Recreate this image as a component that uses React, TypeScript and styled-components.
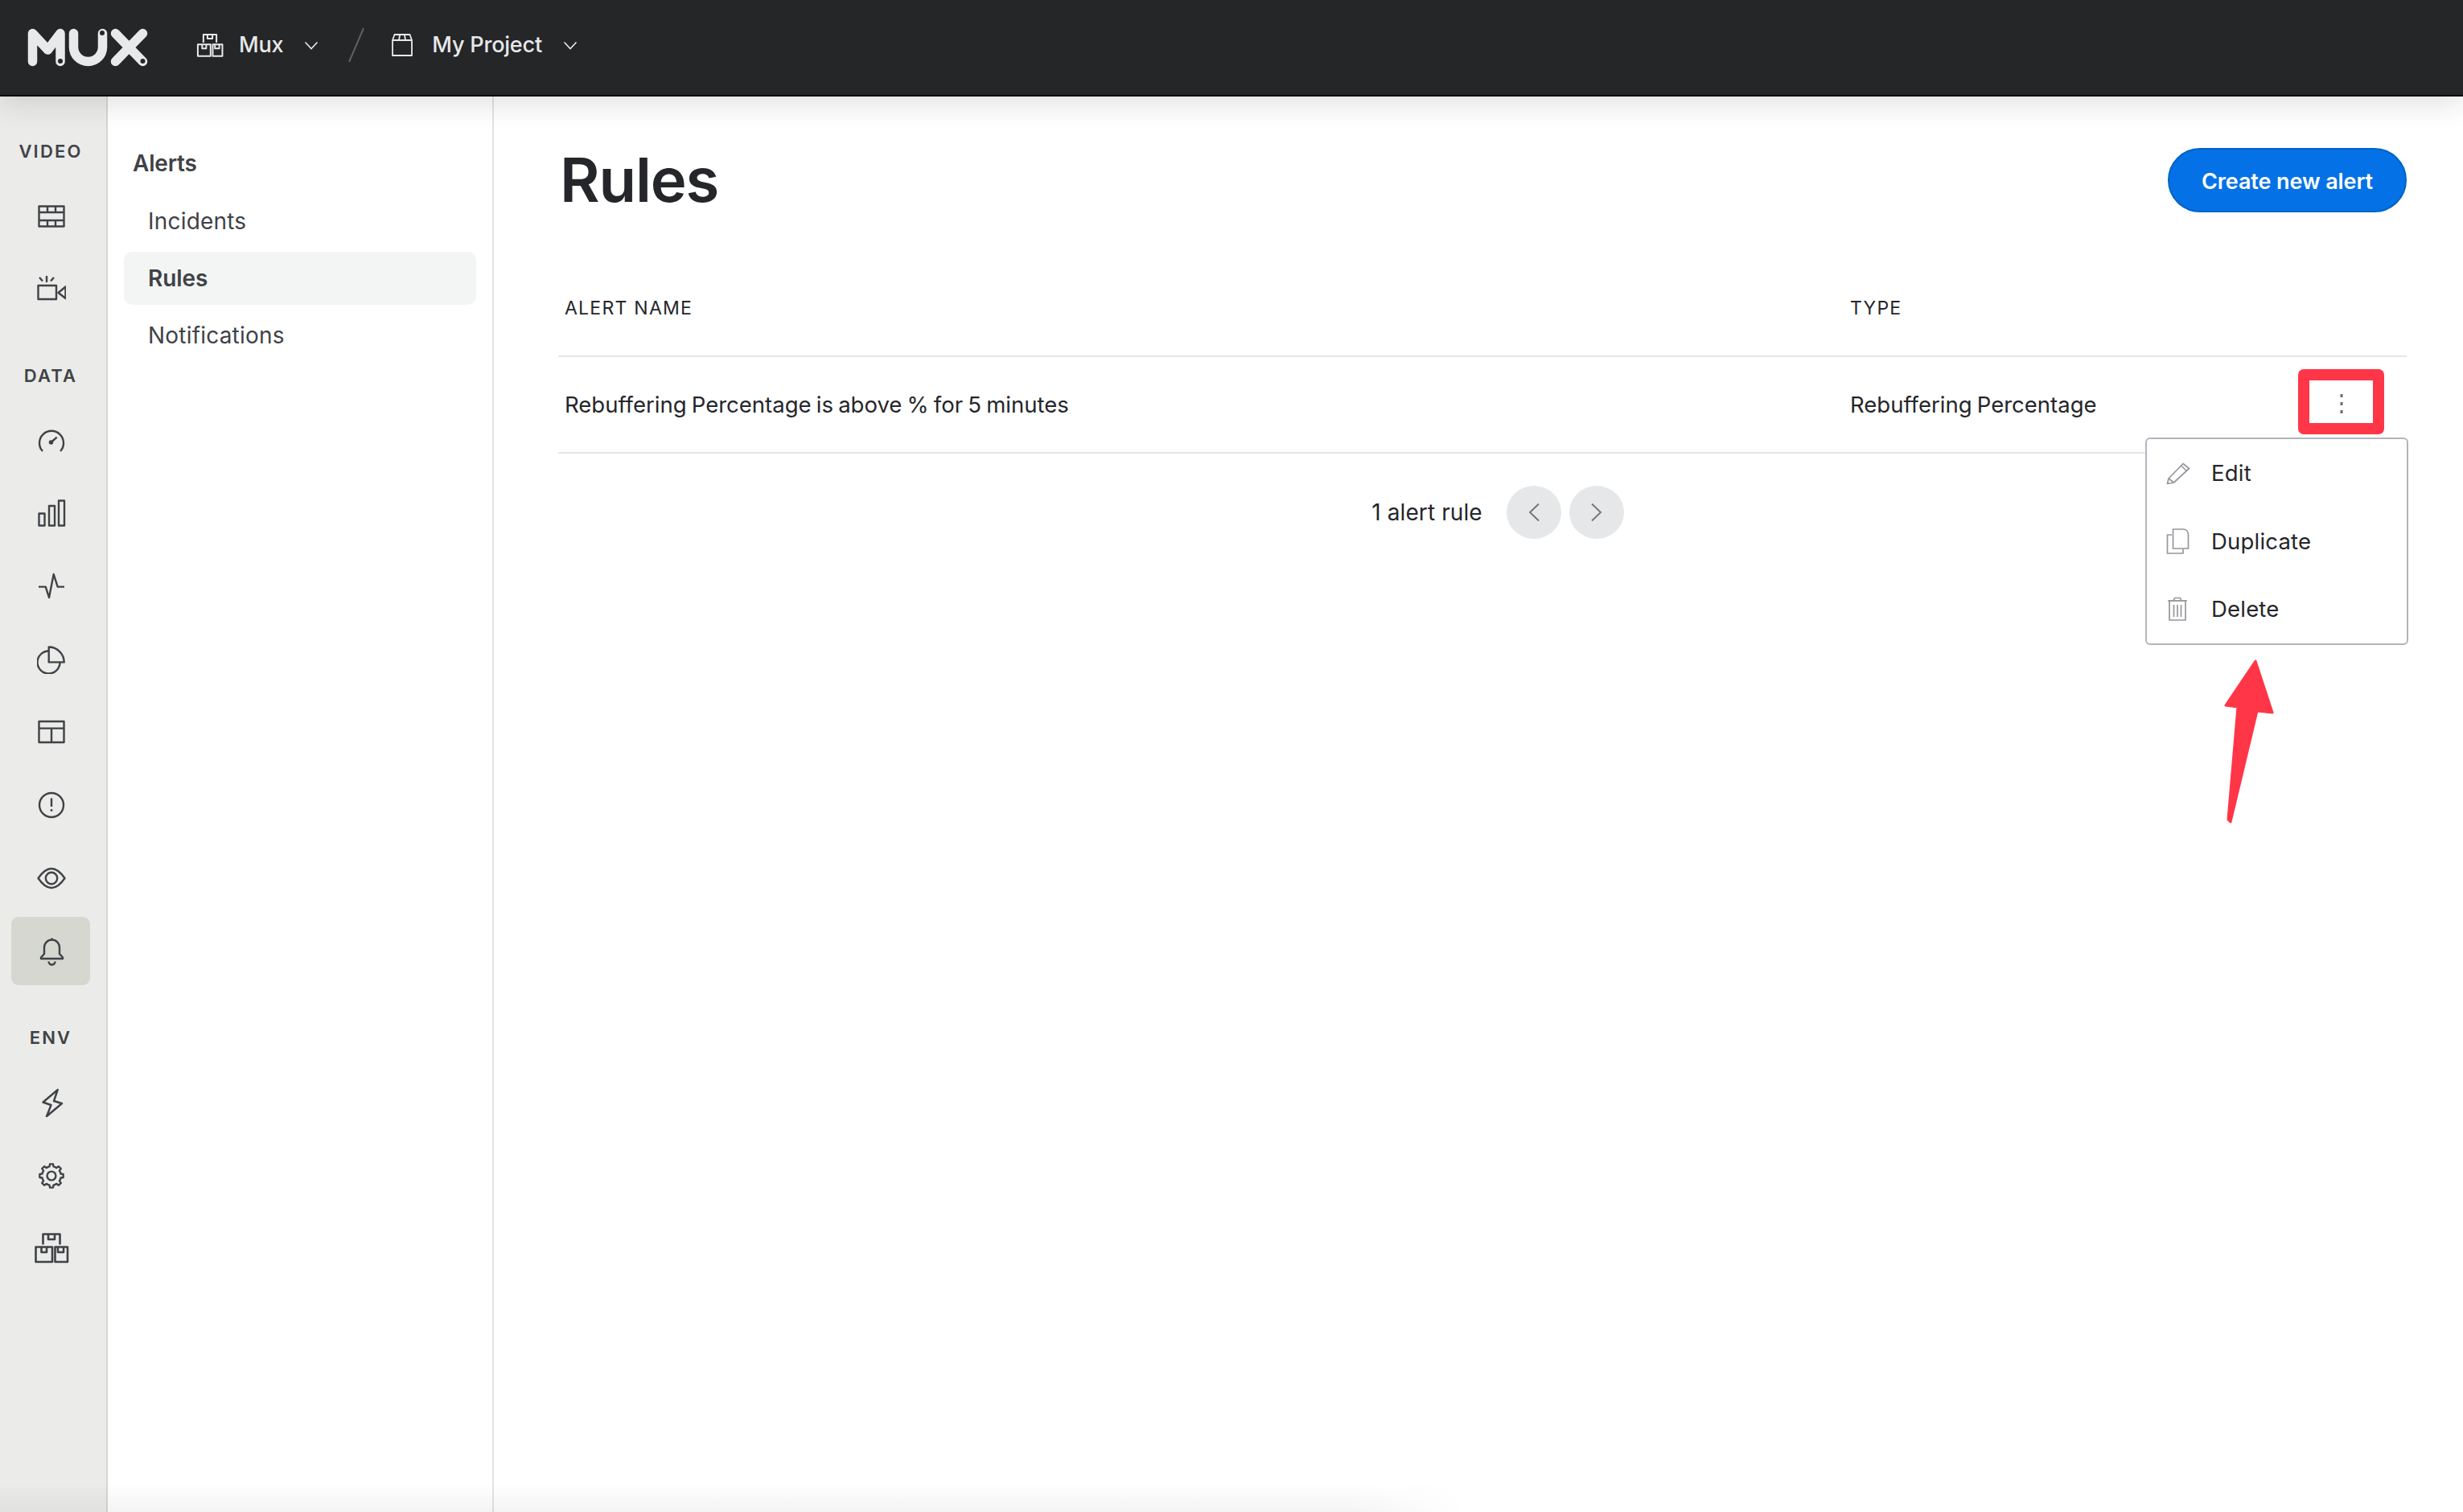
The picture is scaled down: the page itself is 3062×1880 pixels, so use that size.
import React from "react";
import styled, { createGlobalStyle } from "styled-components";

const FONT = `Inter, "Liberation Sans", sans-serif`;

const Global = createGlobalStyle`
  html, body { margin: 0; padding: 0; background: #fff; }
  body { font-family: ${FONT}; overflow: hidden; }
  * { box-sizing: border-box; }
`;

const Page = styled.div`
  position: relative;
  width: 3062px;
  height: 1880px;
  display: flex;
  flex-direction: column;
  overflow: hidden;
  background: #fff;
`;

const TopBar = styled.header`
  position: relative;
  z-index: 2;
  height: 120px;
  flex: none;
  display: flex;
  align-items: center;
  padding: 0 0 6px 34px;
  background: #252628;
  border-bottom: 2px solid #08090a;
  box-shadow: 0 10px 32px rgba(30, 32, 34, 0.13);
  color: #e8e9ea;
`;

const LogoMark = styled.svg`
  width: 150px;
  height: 48px;
  margin: 6px 60px 0 0;
  flex: none;
`;

const CrumbIcon = styled.span<{ $gap: number }>`
  display: flex;
  margin-right: ${(p) => p.$gap}px;
  color: #e8e9ea;
`;

const CrumbText = styled.span`
  font-size: 27px;
  line-height: 34px;
  font-weight: 500;
  letter-spacing: -0.2px;
  color: #e8e9ea;
`;

const CrumbChevron = styled.svg`
  width: 18px;
  height: 11px;
  margin-left: 26px;
  flex: none;
`;

const Slash = styled.svg`
  width: 20px;
  height: 44px;
  margin: 0 34px 0 37px;
  flex: none;
`;

const Body = styled.div`
  flex: 1;
  display: flex;
  min-height: 0;
`;

const Rail = styled.nav`
  width: 134px;
  flex: none;
  padding: 53px 0 0 14px;
  background: #ebebe9;
  border-right: 2px solid #d6d7d1;
`;

const RailGroup = styled.section`
  margin-bottom: 50px;
`;

const RailLabel = styled.div`
  width: 98px;
  height: 30px;
  margin-bottom: 23px;
  text-align: center;
  font-size: 22px;
  line-height: 30px;
  font-weight: 600;
  letter-spacing: 2.2px;
  color: #3f4247;
`;

const RailItem = styled.div<{ $active?: boolean }>`
  width: 98px;
  height: 85px;
  margin-bottom: 5.8px;
  padding-left: 1px;
  display: flex;
  align-items: center;
  justify-content: center;
  border-radius: 9px;
  color: #3f4247;
  background: ${(p) => (p.$active ? "#d6d7d0" : "transparent")};
  &:last-child { margin-bottom: 0; }
`;

const SubNav = styled.aside`
  width: 480px;
  flex: none;
  padding: 64px 20px 0 20px;
  border-right: 2px solid #e3e4df;
`;

const SubTitle = styled.div`
  height: 38px;
  padding-left: 11px;
  margin-bottom: 20px;
  font-size: 28px;
  line-height: 38px;
  font-weight: 600;
  letter-spacing: -0.2px;
  color: #3f4247;
`;

const SubLink = styled.div<{ $active?: boolean }>`
  height: 66px;
  margin-bottom: 5px;
  display: flex;
  align-items: center;
  padding-left: 30px;
  border-radius: 10px;
  font-size: 28px;
  font-weight: ${(p) => (p.$active ? 600 : 400)};
  letter-spacing: ${(p) => (p.$active ? "-0.1px" : "0.2px")};
  color: #3f4247;
  background: ${(p) => (p.$active ? "#f3f5f4" : "transparent")};
`;

const Main = styled.main`
  flex: 1;
  min-width: 0;
  padding: 64px 70px 0 80px;
  color: #25262a;
`;

const PageHead = styled.div`
  height: 80px;
  display: flex;
  align-items: center;
  justify-content: space-between;
`;

const Title = styled.h1`
  margin: 0 0 2px 2px;
  font-size: 76px;
  line-height: 79px;
  font-weight: 600;
  letter-spacing: -1.1px;
  color: #25262a;
`;

const PrimaryButton = styled.button`
  width: 297px;
  height: 80px;
  padding: 2px 0 0;
  border: 2px solid #0062c4;
  border-radius: 40px;
  background: #0472e6;
  color: #fff;
  font-family: ${FONT};
  font-size: 27px;
  font-weight: 600;
  letter-spacing: -0.1px;
`;

const Table = styled.div`
  margin-top: 60px;
`;

const HeadRow = styled.div`
  height: 120px;
  display: grid;
  grid-template-columns: 1598px 1fr;
  align-items: center;
  border-bottom: 2px solid #e6e7e8;
`;

const HeadCell = styled.div`
  padding-left: 8px;
  font-size: 23px;
  font-weight: 400;
  letter-spacing: 1.25px;
  color: #25262a;
`;

const DataRow = styled.div`
  position: relative;
  height: 120px;
  display: grid;
  grid-template-columns: 1598px 1fr;
  align-items: center;
  border-bottom: 2px solid #e6e7e8;
`;

const DataCell = styled.div`
  padding-left: 8px;
  font-size: 27.5px;
  font-weight: 400;
  word-spacing: -1.5px;
  color: #25262a;
`;

const AnnotationBox = styled.div`
  position: absolute;
  top: 15px;
  right: 28px;
  width: 107px;
  height: 81px;
  padding-top: 4px;
  display: flex;
  align-items: center;
  justify-content: center;
  border: 14px solid #ff3647;
  border-radius: 7px;
`;

const KebabIcon = styled.svg`
  width: 4px;
  height: 26px;
`;

const Menu = styled.div`
  position: absolute;
  z-index: 1;
  top: 100px;
  right: -2px;
  width: 327px;
  height: 258px;
  padding: 0;
  background: #fff;
  border: 2px solid #b4b5bb;
  border-radius: 6px;
`;

const MenuItem = styled.div`
  height: 84.5px;
  display: flex;
  align-items: center;
  padding-left: 24px;
  font-size: 27.5px;
  letter-spacing: 0.2px;
  color: #25262a;
`;

const MenuIcon = styled.span`
  width: 56px;
  flex: none;
  display: flex;
  align-items: center;
  color: #96979c;
`;

const Arrow = styled.svg`
  position: absolute;
  z-index: 1;
  left: 2071px;
  top: 375px;
  width: 64px;
  height: 208px;
`;

const Pager = styled.div`
  margin-top: 40px;
  padding-left: 38px;
  display: flex;
  align-items: center;
  justify-content: center;
`;

const PagerText = styled.span`
  margin-right: 30px;
  font-size: 28px;
  letter-spacing: 0.1px;
  color: #25262a;
`;

const PagerButton = styled.button`
  width: 68px;
  height: 66px;
  margin-right: 10px;
  padding: 0;
  display: flex;
  align-items: center;
  justify-content: center;
  border: 0;
  border-radius: 50%;
  background: #e6e7e8;
  color: #707176;
  &:last-child { margin-right: 0; }
`;

const BottomFade = styled.div`
  position: absolute;
  left: 0;
  bottom: 0;
  width: 1820px;
  height: 36px;
  background: linear-gradient(to bottom, rgba(60, 60, 60, 0), rgba(60, 60, 60, 0.06));
  -webkit-mask-image: linear-gradient(to right, #000 92%, transparent);
  mask-image: linear-gradient(to right, #000 92%, transparent);
  pointer-events: none;
`;

type IconProps = { children: React.ReactNode; w?: number; h?: number; vw?: number; vh?: number; sw?: number };
const Ico = ({ children, w = 36, h = 36, vw, vh, sw = 2.4 }: IconProps) => (
  <svg
    width={w}
    height={h}
    viewBox={`0 0 ${vw ?? w} ${vh ?? h}`}
    fill="none"
    stroke="currentColor"
    strokeWidth={sw}
    strokeLinejoin="round"
  >
    {children}
  </svg>
);

const gearPath = (() => {
  const teeth = 8;
  const cx = 18;
  const cy = 18;
  const pts: string[] = [];
  for (let i = 0; i < teeth; i++) {
    const base = (i / teeth) * Math.PI * 2 - Math.PI / 2;
    const seg = (Math.PI * 2) / teeth;
    const coords: [number, number][] = [
      [11.8, -0.5 * seg],
      [11.8, -0.27 * seg],
      [14.8, -0.17 * seg],
      [14.8, 0.17 * seg],
      [11.8, 0.27 * seg],
    ];
    coords.forEach(([r, a]) => {
      pts.push(`${(cx + r * Math.cos(base + a)).toFixed(2)} ${(cy + r * Math.sin(base + a)).toFixed(2)}`);
    });
  }
  return `M${pts.join("L")}Z`;
})();

const BoxesIcon = ({ w = 44, h = 40, sw = 2.6 }: { w?: number; h?: number; sw?: number }) => (
  <Ico w={w} h={h} vw={44} vh={40} sw={sw}>
    <path d="M11.5 15.5V2.5H32.5V15.5" />
    <path d="M18 2.5V9H26V2.5" />
    <rect x="2.5" y="18.5" width="20.5" height="18.5" />
    <path d="M9.5 18.5V25H16V18.5" />
    <rect x="26.5" y="18.5" width="15.5" height="18.5" />
    <path d="M30 18.5V25H37V18.5" />
  </Ico>
);

const railVideo = [
  <Ico key="film">
    <rect x="2.5" y="5.5" width="31" height="25" />
    <path d="M2.5 13H33.5M2.5 23H33.5M13 5.5V13M23 5.5V13M13 23V30.5M23 23V30.5" />
  </Ico>,
  <Ico key="cam">
    <rect x="1.5" y="14" width="22.5" height="17" />
    <path d="M35.5 15.5V30L26.5 23Z" />
    <path d="M12 2V10M3 4L7 8.5M21 4L17 8.5" />
  </Ico>,
];

const railData = [
  <Ico key="gauge">
    <path d="M7 32A15 15 0 1 1 29 32" />
    <path d="M17.5 21L24.7 14.6" />
    <circle cx="17.5" cy="21" r="1.6" fill="currentColor" />
  </Ico>,
  <Ico key="bars">
    <rect x="2.5" y="18.5" width="7" height="15" />
    <rect x="15" y="9" width="7" height="24.5" />
    <rect x="27" y="2.5" width="7" height="31" />
  </Ico>,
  <Ico key="pulse">
    <path d="M2 18.6H10.7L15 32L20.7 3L25.7 18.6H34" />
  </Ico>,
  <Ico key="pie">
    <path d="M14.7 2.5A19 19 0 0 1 33.7 21.4H14.7Z" />
    <path d="M14.7 7.5A14 14 0 1 0 28.5 21.4" />
  </Ico>,
  <Ico key="table">
    <rect x="2.5" y="5" width="31" height="26" />
    <path d="M2.5 13.6H33.5M18 13.6V31" />
  </Ico>,
  <Ico key="alert">
    <circle cx="18" cy="18" r="15" />
    <path d="M18 9.5V20" />
    <circle cx="18" cy="24.5" r="1.4" fill="currentColor" stroke="none" />
  </Ico>,
  <Ico key="eye">
    <path d="M1.5 18C7 10 12 6 18 6S29 10 34.5 18C29 26 24 30 18 30S7 26 1.5 18Z" />
    <circle cx="18" cy="18" r="7.2" />
  </Ico>,
];

const railEnv = [
  <Ico key="bolt">
    <path d="M25.7 2L7.5 17.5L17.5 21L12 35L31 19L21 16Z" />
  </Ico>,
  <Ico key="gear">
    <path d={gearPath} />
    <circle cx="18" cy="18" r="5.4" />
  </Ico>,
  <BoxesIcon key="boxes" />,
];

const Chevron = () => (
  <CrumbChevron viewBox="0 0 18 11" fill="none" stroke="#e8e9ea" strokeWidth="1.6">
    <path d="M1.5 1.5L9 9.5L16.5 1.5" />
  </CrumbChevron>
);

export default function App() {
  return (
    <Page>
      <Global />
      <TopBar>
        <LogoMark viewBox="0 0 150 48" fill="none" aria-label="Mux">
          <g stroke="#e8e9ea" strokeWidth="11.5" strokeLinecap="round" strokeLinejoin="round">
            <path d="M6.5 41.5V6.5L25.5 27L41 6.5V41.5" />
            <path d="M57.5 6.5V23.5A18 18 0 0 0 93.5 23.5V6.5" />
            <path d="M109.5 6.5L143.5 41.5M143.5 6.5L109.5 41.5" />
          </g>
          <g fill="#252628">
            <circle cx="41" cy="41" r="3" />
            <circle cx="93" cy="6" r="3" />
            <circle cx="143.5" cy="41" r="3" />
          </g>
        </LogoMark>
        <CrumbIcon $gap={19}>
          <BoxesIcon w={34} h={31} sw={2.6} />
        </CrumbIcon>
        <CrumbText>Mux</CrumbText>
        <Chevron />
        <Slash viewBox="0 0 20 44" fill="none" stroke="#5f6063" strokeWidth="2">
          <path d="M19 1L1 43" />
        </Slash>
        <CrumbIcon $gap={24}>
          <Ico w={26} h={28} sw={1.8}>
            <path d="M1 27V8L3.5 1H22.5L25 8V27Z" />
            <path d="M1 8H25M10 1.5L9 8M16 1.5L17 8" />
          </Ico>
        </CrumbIcon>
        <CrumbText>My Project</CrumbText>
        <Chevron />
      </TopBar>
      <Body>
        <Rail>
          <RailGroup>
            <RailLabel>VIDEO</RailLabel>
            {railVideo.map((icon, i) => (
              <RailItem key={i}>{icon}</RailItem>
            ))}
          </RailGroup>
          <RailGroup>
            <RailLabel>DATA</RailLabel>
            {railData.map((icon, i) => (
              <RailItem key={i}>{icon}</RailItem>
            ))}
            <RailItem $active>
              <Ico>
                <path d="M5 27H32V25.5L28 21V13A9.5 9.5 0 0 0 9 13V21L5 25.5Z" />
                <path d="M18.5 3.5V1.5M14.5 30.5A4 4 0 0 0 22.5 30.5" />
              </Ico>
            </RailItem>
          </RailGroup>
          <RailGroup>
            <RailLabel>ENV</RailLabel>
            {railEnv.map((icon, i) => (
              <RailItem key={i}>{icon}</RailItem>
            ))}
          </RailGroup>
        </Rail>
        <SubNav>
          <SubTitle>Alerts</SubTitle>
          <SubLink>Incidents</SubLink>
          <SubLink $active>Rules</SubLink>
          <SubLink>Notifications</SubLink>
        </SubNav>
        <Main>
          <PageHead>
            <Title>Rules</Title>
            <PrimaryButton>Create new alert</PrimaryButton>
          </PageHead>
          <Table>
            <HeadRow>
              <HeadCell>ALERT NAME</HeadCell>
              <HeadCell>TYPE</HeadCell>
            </HeadRow>
            <DataRow>
              <DataCell>Rebuffering Percentage is above % for 5 minutes</DataCell>
              <DataCell>Rebuffering Percentage</DataCell>
              <AnnotationBox>
                <KebabIcon viewBox="0 0 4 26" fill="#6b6c72">
                  <rect x="0.5" y="1" width="3" height="4" />
                  <rect x="0.5" y="11" width="3" height="4" />
                  <rect x="0.5" y="21" width="3" height="4" />
                </KebabIcon>
              </AnnotationBox>
              <Menu>
                <MenuItem>
                  <MenuIcon>
                    <Ico w={30} h={30} sw={1.7}>
                      <path d="M1.5 28.5L3 22L21 3.5L28.5 9.5L9.5 27Z" />
                      <path d="M18.5 6L25.5 12.5M3 22L9.5 27" />
                    </Ico>
                  </MenuIcon>
                  Edit
                </MenuItem>
                <MenuItem>
                  <MenuIcon>
                    <Ico w={29} h={32} sw={1.7}>
                      <path d="M7 8H1.5V31H21V25.5" />
                      <path d="M8.5 1H21C25 1 27.5 4 27.5 8V25H8.5Z" />
                    </Ico>
                  </MenuIcon>
                  Duplicate
                </MenuItem>
                <MenuItem>
                  <MenuIcon>
                    <Ico w={28} h={30} sw={1.7}>
                      <path d="M2 5H26M9 5L10.5 1.5H17.5L19 5" />
                      <rect x="4" y="5" width="20" height="24" />
                      <path d="M9.5 10V25M14 10V25M18.5 10V25" />
                    </Ico>
                  </MenuIcon>
                  Delete
                </MenuItem>
              </Menu>
              <Arrow viewBox="0 0 64 208" fill="#ff3647" stroke="#ff3647" strokeWidth="3" strokeLinejoin="round">
                <path d="M39 3L60 67L41 65L8 203L5 200L17 60L2 58Z" />
              </Arrow>
            </DataRow>
          </Table>
          <Pager>
            <PagerText>1 alert rule</PagerText>
            <PagerButton aria-label="Previous">
              <svg width="14" height="24" viewBox="0 0 14 24" fill="none" stroke="currentColor" strokeWidth="1.8">
                <path d="M13 1.5L2 12L13 22.5" />
              </svg>
            </PagerButton>
            <PagerButton aria-label="Next">
              <svg width="14" height="24" viewBox="0 0 14 24" fill="none" stroke="currentColor" strokeWidth="1.8">
                <path d="M1 1.5L12 12L1 22.5" />
              </svg>
            </PagerButton>
          </Pager>
        </Main>
      </Body>
      <BottomFade />
    </Page>
  );
}
